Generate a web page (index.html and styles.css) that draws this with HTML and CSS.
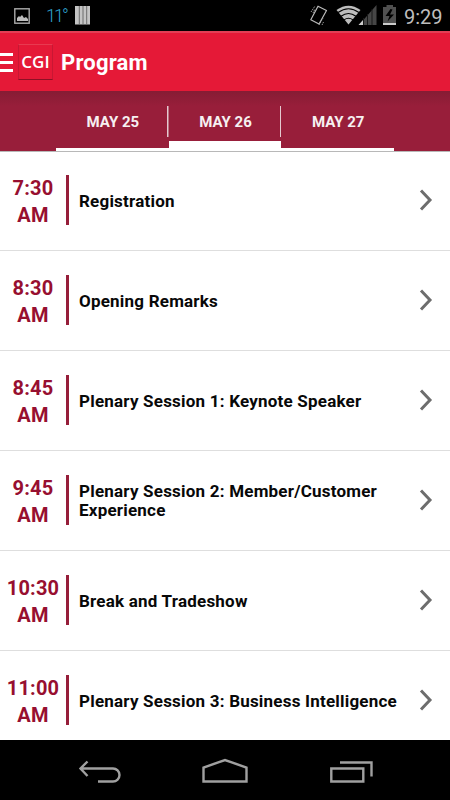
FILE: index.html
```html
<!DOCTYPE html>
<html lang="en">
<head>
<meta charset="utf-8">
<title>Program</title>
<link rel="stylesheet" href="styles.css">
</head>
<body>
<div class="status">
  <svg class="status-left" width="100" height="31" viewBox="0 0 100 31">
    <rect x="14.800" y="8.800" width="14.400" height="14.400" fill="none" stroke="#aaa" stroke-width="1.400"/>
    <path d="M17 21v-3l2-2 1 1 2-2 2 3 2-1 2 2v2z" fill="#bdbdbd"/>
    <path d="M75 6h15v18.500h-15z" fill="#c4c4c4"/>
    <path d="M79.300 6v19M83 6v19M86.700 6v19" stroke="#626262" stroke-width=".9"/>
  </svg>
  <span class="temp">11°</span>
  <svg class="status-right" width="100" height="31" viewBox="300 0 100 31">
    <path d="M318 6.200l8.500 4.300-7.500 13.500-8.200-4.300z" fill="none" stroke="#bbb" stroke-width="1.200" stroke-linejoin="round"/>
    <path d="M311 12l4-6M313 13l2-4M319 25l4-7M322 25l1.500-3" stroke="#999" stroke-width="1" stroke-dasharray="1.500 .7"/>
    <path d="M348.500 24.500L336.500 10q12-8.500 24 0z" fill="#bdbdbd"/>
    <path d="M338 12.500q10.500-7.500 21 0M341 16.300q7.500-5.500 15 0M344 19.900q4.500-3.200 9 0" fill="none" stroke="#000" stroke-width="1.100"/>
    <path d="M359 25l17.500-20v20z" fill="#464646"/>
    <path d="M358.500 25l4.500-5v5z" fill="#ccc"/>
    <path d="M363.500 18v7M367.500 14v11M372 9v16" stroke="#181818"/>
    <path d="M386.500 5h6.500v2h3v18h-13v-18h3.500z" fill="#505050"/>
    <path d="M383 23h13v2h-13z" fill="#ccc"/>
    <path d="M390.500 9l-5 7h4l-2 5.500 6.500-7h-4l2.500-5z" fill="#000"/>
  </svg>
  <span class="clock">9:29</span>
</div>
<header class="appbar">
  <div class="menu"><i></i><i></i><i></i></div>
  <div class="logo"><span>CGI</span></div>
  <h1><span>Program</span></h1>
</header>
<nav class="tabs">
  <div class="tab"><span>MAY 25</span></div>
  <div class="tab active"><span>MAY 26</span></div>
  <div class="tab"><span>MAY 27</span></div>
</nav>
<main class="list">
  <div class="row"><div class="time">7:30<br>AM</div><div class="title">Registration</div><svg class="chev" width="14" height="22" viewBox="0 0 14 22"><path d="M2 1.500L11 11 2 20.500"/></svg></div>
  <div class="row"><div class="time">8:30<br>AM</div><div class="title">Opening Remarks</div><svg class="chev" width="14" height="22" viewBox="0 0 14 22"><path d="M2 1.500L11 11 2 20.500"/></svg></div>
  <div class="row"><div class="time">8:45<br>AM</div><div class="title">Plenary Session 1: Keynote Speaker</div><svg class="chev" width="14" height="22" viewBox="0 0 14 22"><path d="M2 1.500L11 11 2 20.500"/></svg></div>
  <div class="row"><div class="time">9:45<br>AM</div><div class="title double">Plenary Session 2: Member/Customer<br>Experience</div><svg class="chev" width="14" height="22" viewBox="0 0 14 22"><path d="M2 1.500L11 11 2 20.500"/></svg></div>
  <div class="row"><div class="time">10:30<br>AM</div><div class="title">Break and Tradeshow</div><svg class="chev" width="14" height="22" viewBox="0 0 14 22"><path d="M2 1.500L11 11 2 20.500"/></svg></div>
  <div class="row"><div class="time">11:00<br>AM</div><div class="title">Plenary Session 3: Business Intelligence</div><svg class="chev" width="14" height="22" viewBox="0 0 14 22"><path d="M2 1.500L11 11 2 20.500"/></svg></div>
</main>
<footer class="navbar">
  <svg width="450" height="60" viewBox="0 740 450 60">
    <g fill="none" stroke="#a0a0a0" stroke-width="2.400">
      <path d="M80.500 768.500h32.500a6.400 6.400 0 0 1 0 13H98M87.500 761.500l-7 7 7 7.500"/>
      <path d="M203.500 781.500v-14l21.500-7.500 21.500 7.500v14z"/>
      <path d="M331.300 768.500h32v13h-32zM340 762.500h31.500v14"/>
    </g>
  </svg>
</footer>
</body>
</html>
```

FILE: styles.css
```css
* { box-sizing: border-box; }
body {
  margin: 0;
  width: 450px;
  height: 800px;
  overflow: hidden;
  display: flex;
  flex-direction: column;
  background: #fff;
  font-family: Roboto, sans-serif;
}
.status {
  height: 31px;
  flex: none;
  display: flex;
  background: #000;
  position: relative;
}
.status-left { flex: none; }
.status-right { margin-left: 200px; flex: none; }
.temp {
  position: absolute;
  left: 46px;
  top: 5px;
  font-size: 18px;
  line-height: 22px;
  font-weight: 300;
  letter-spacing: -2px;
  color: #2fa4d0;
}
.clock {
  margin-left: 4px;
  font-size: 20px;
  line-height: 34px;
  color: #bebebe;
}
.appbar {
  height: 60px;
  flex: none;
  display: flex;
  align-items: center;
  background: #e51937;
  border-top: 2px solid #e33e55;
}
.menu {
  width: 13px;
  display: flex;
  flex-direction: column;
  gap: 5px;
}
.menu i { height: 3px; background: #fff; }
.logo {
  width: 35px;
  height: 36px;
  margin-left: 5px;
  margin-top: -1px;
  background: #e51937;
  border: 1px solid #c91733;
  border-top-color: #e83a50;
  border-bottom-color: #8e1025;
  display: flex;
  align-items: center;
  justify-content: center;
  color: #fff;
  font: 600 17px/20px "Open Sans", sans-serif;
}
h1 {
  margin: 1px 0 0 8px;
  font-size: 22px;
  line-height: 28px;
  font-weight: 700;
  letter-spacing: 0.2px;
  color: #fff;
}
.tabs {
  height: 61px;
  flex: none;
  display: flex;
  padding: 0 56px;
  background: linear-gradient(#861c34, #981e3a 25%, #981e3a);
  border-bottom: 1px solid #b8b8b8;
}
.tab {
  flex: 1;
  display: flex;
  justify-content: center;
  padding: 21px 0 0 1px;
  border-bottom: 3px solid #fff;
  font-size: 15px;
  line-height: 20px;
  font-weight: 700;
  color: #f6f0f1;
  background: linear-gradient(#e4c9cf, #e4c9cf) right 15px / 1.500px 31px no-repeat;
}
.tab:last-child { background: none; }
.tab.active { border-bottom-width: 10px; }
.list {
  height: 588px;
  flex: none;
  overflow: hidden;
}
.row {
  height: 100px;
  display: flex;
  align-items: center;
  border-bottom: 1px solid #dedede;
}
.row:first-child { height: 99px; padding-bottom: 1px; }
.time {
  width: 69px;
  height: 50px;
  margin-bottom: 1px;
  border-right: 3px solid #961e3a;
  text-align: center;
  font-size: 20px;
  line-height: 27px;
  font-weight: 700;
  letter-spacing: 0.2px;
  color: #970f30;
}
.title {
  flex: 1;
  padding: 1px 0 0 10px;
  font-size: 17px;
  line-height: 19px;
  font-weight: 700;
  letter-spacing: 0.210px;
  color: #080808;
  white-space: nowrap;
}
.title.double { padding-top: 0; }
.chev {
  flex: none;
  margin: 0 17px 2px 0;
  fill: none;
  stroke: #6d6d6d;
  stroke-width: 3;
}
.navbar {
  height: 60px;
  flex: none;
  background: #000;
}
```
